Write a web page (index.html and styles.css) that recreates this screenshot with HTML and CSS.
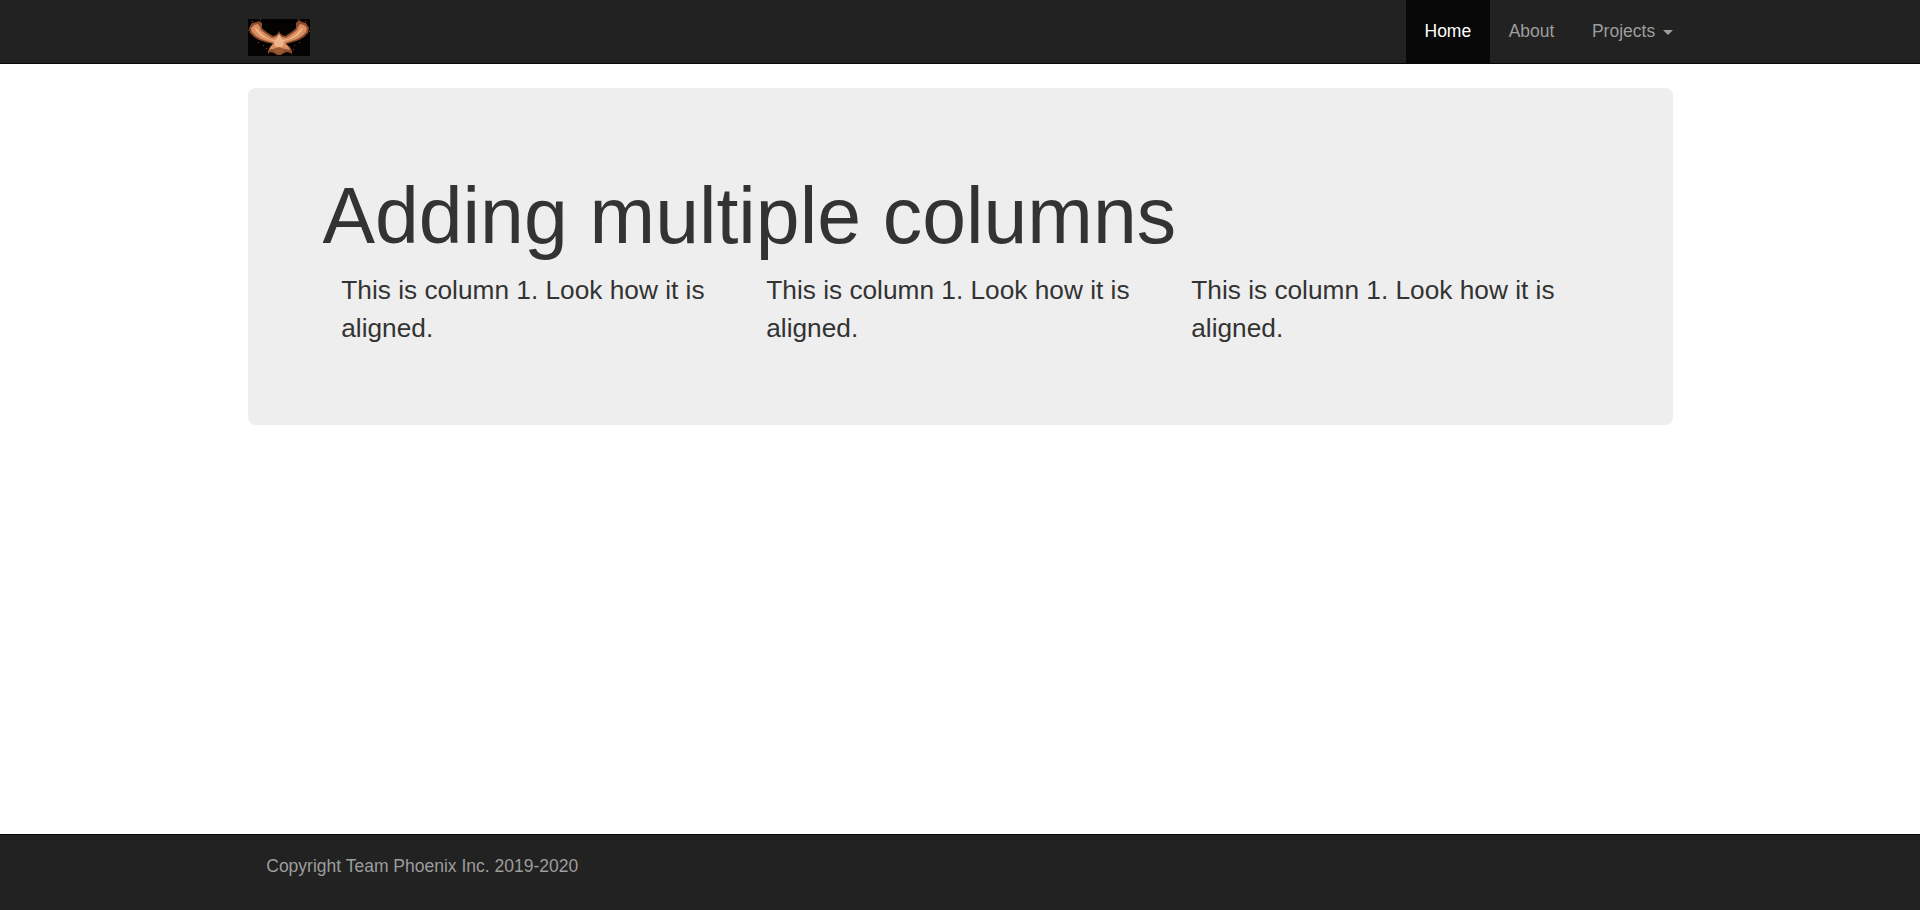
FILE: index.html
```html
<!DOCTYPE html>
<html lang="en">
<head>
<meta charset="utf-8">
<title>Team Phoenix</title>
<link rel="stylesheet" href="styles.css">
</head>
<body>
<header class="navbar">
  <div class="wrap nav-inner">
    <a class="brand" href="#" aria-label="Team Phoenix">
      <svg class="logo" viewBox="0 0 62 37" width="62" height="37">
        <rect width="62" height="37" fill="#050302"/>
        <path fill="#8a4c2c" d="M1 9L4 4L9 3L11 2L14 4L14 9L16 11L20 14L25 17L28 16L30 14L31 12L32 14L34 16L37 17L42 14L46 11L48 9L48 4L51 1L54 3L58 4L61 9L60 14L56 18L51 21L45 23L38 25L42 28L44 32L44 35L40 33L36 34L33 36L29 36L26 34L22 33L20 35L20 32L22 28L25 25L17 23L11 21L6 18L2 14Z"/>
        <path fill="#d98f60" d="M3 9L6 6L10 5L12 8L13 11L18 15L24 19L28 18L31 15L34 18L38 19L44 15L49 11L50 8L52 5L56 6L59 9L58 13L54 17L49 20L43 22L37 24L40 27L42 31L38 30L34 31L28 31L24 30L21 31L23 27L26 24L19 22L13 20L8 17L4 13Z"/>
        <path fill="#efb48c" d="M7 8L10 11L15 16L21 20L27 21L29 19L31 15L33 19L35 21L41 20L47 16L52 11L55 8L54 12L49 17L43 20L36 22L35 27L31 29L27 27L26 22L19 20L13 17L8 12Z"/>
        <path fill="#9c5733" d="M25 30L31 28L37 30L35 33L31 35L27 33Z"/>
        <g fill="#7a4428">
          <rect x="4" y="2" width="1" height="1"/><rect x="12" y="0" width="1" height="1"/><rect x="0" y="11" width="1" height="1"/>
          <rect x="57" y="2" width="1" height="1"/><rect x="50" y="0" width="1" height="1"/><rect x="61" y="12" width="1" height="1"/>
          <rect x="10" y="23" width="1" height="1"/><rect x="15" y="26" width="1" height="1"/><rect x="18" y="29" width="1" height="1"/>
          <rect x="51" y="23" width="1" height="1"/><rect x="46" y="26" width="1" height="1"/><rect x="45" y="30" width="1" height="1"/>
        </g>
      </svg>
    </a>
    <nav class="nav">
      <a class="nav-link active" href="#">Home</a>
      <a class="nav-link" href="#">About</a>
      <a class="nav-link" href="#">Projects <span class="caret"></span></a>
    </nav>
  </div>
</header>
<main class="wrap main">
  <section class="jumbotron">
    <h1 class="title">Adding multiple columns</h1>
    <div class="columns">
      <p class="col">This is column 1. Look how it is aligned.</p>
      <p class="col">This is column 1. Look how it is aligned.</p>
      <p class="col">This is column 1. Look how it is aligned.</p>
    </div>
  </section>
</main>
<footer class="footer">
  <div class="wrap">
    <p class="copy">Copyright Team Phoenix Inc. 2019-2020</p>
  </div>
</footer>
</body>
</html>
```
FILE: styles.css
```css
* { box-sizing: border-box; }
html, body { height: 100%; }
body {
  margin: 0;
  display: flex;
  flex-direction: column;
  min-height: 910px;
  font-family: "Liberation Sans", Arial, sans-serif;
  font-size: 17.5px;
  line-height: 25px;
  color: #333;
  background: #fff;
}
.wrap { width: 1425px; margin: 0 auto; }
.navbar {
  height: 63.5px;
  flex: none;
  background: #222;
  border-bottom: 1px solid #080808;
}
.nav-inner { display: flex; justify-content: space-between; height: 62.5px; }
.brand { display: block; padding-top: 19px; line-height: 0; }
.logo { display: block; }
.nav { display: flex; margin-right: -18.75px; }
.nav-link {
  display: block;
  padding: 18.75px;
  color: #9d9d9d;
  text-decoration: none;
}
.nav-link.active { color: #fff; background: #080808; }
.caret {
  display: inline-block;
  width: 0;
  height: 0;
  margin-left: 2.5px;
  vertical-align: middle;
  border-top: 5px solid;
  border-left: 5px solid transparent;
  border-right: 5px solid transparent;
}
.main { flex: 1; padding-top: 24.5px; }
.jumbotron {
  padding: 60px 75px;
  background: #eee;
  border-radius: 7.5px;
}
.title {
  margin: 25px 0 12.5px;
  font-size: 78.75px;
  font-weight: 400;
  line-height: 1.1;
}
.columns { display: grid; grid-template-columns: repeat(3, 425px); }
.col {
  margin: 0 0 18px;
  padding: 0 18.75px;
  font-size: 26.25px;
  line-height: 37.5px;
  color: #333;
}
.footer {
  height: 76px;
  flex: none;
  background: #222;
  border-top: 1px solid #080808;
}
.copy {
  margin: 0;
  padding: 18.75px 0 0 18.75px;
  color: #9d9d9d;
}
```
